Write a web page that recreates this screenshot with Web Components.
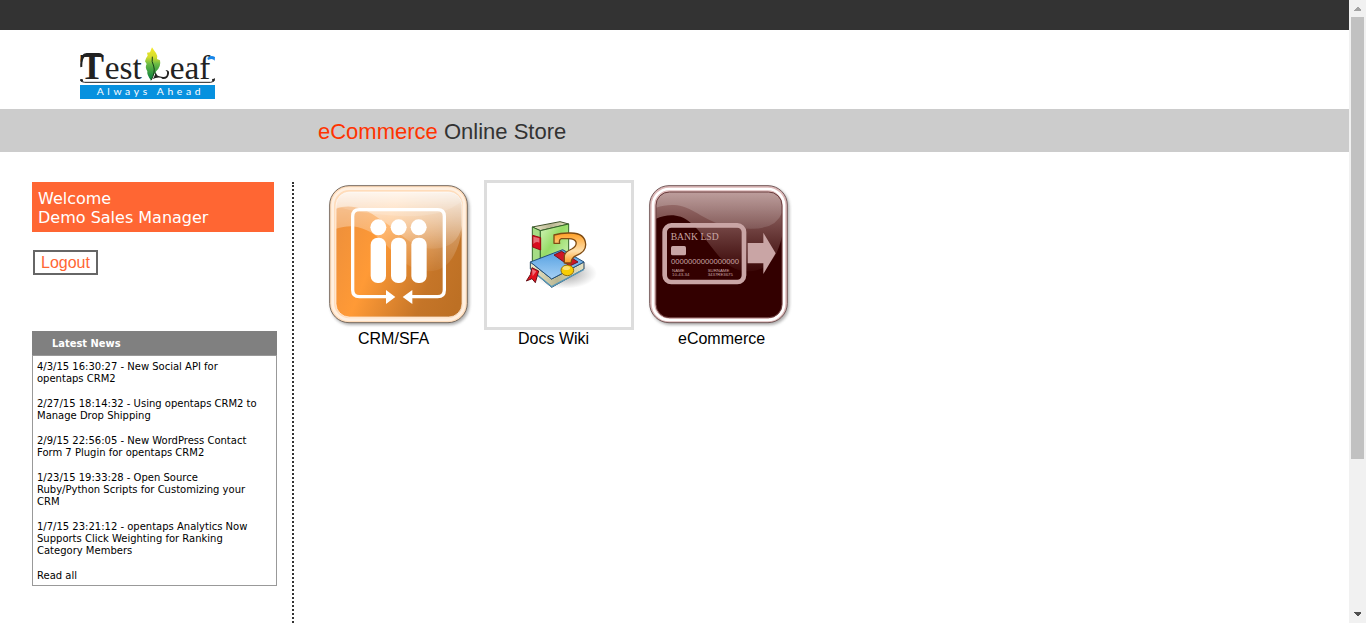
<!DOCTYPE html>
<html lang="en">
<head>
<meta charset="utf-8">
<title>eCommerce Online Store</title>
<style>
  body { margin: 0; background: #fff; color: #000; font-family: "Liberation Sans", Arial, sans-serif; }
</style>
</head>
<body>
<app-shell>
  <site-header></site-header>
  <title-bar><span slot="accent">eCommerce</span> Online Store</title-bar>
  <page-body>
    <welcome-box slot="side">Demo Sales Manager</welcome-box>
    <logout-form slot="side"></logout-form>
    <news-panel slot="side" heading="Latest News">
      <news-item>4/3/15 16:30:27 - New Social API for opentaps CRM2</news-item>
      <news-item>2/27/15 18:14:32 - Using opentaps CRM2 to Manage Drop Shipping</news-item>
      <news-item>2/9/15 22:56:05 - New WordPress Contact Form 7 Plugin for opentaps CRM2</news-item>
      <news-item>1/23/15 19:33:28 - Open Source <br>Ruby/Python Scripts for Customizing your <br>CRM</news-item>
      <news-item>1/7/15 23:21:12 - opentaps Analytics Now Supports Click Weighting for Ranking Category Members</news-item>
      <news-item>Read all</news-item>
    </news-panel>
    <app-tile><crm-icon slot="icon"></crm-icon>CRM/SFA</app-tile>
    <app-tile><wiki-icon slot="icon"></wiki-icon>Docs Wiki</app-tile>
    <app-tile><store-icon slot="icon"></store-icon>eCommerce</app-tile>
  </page-body>
  <scroll-track slot="scroll"></scroll-track>
</app-shell>

<script>
const define = (name, html) => {
  const template = document.createElement('template');
  template.innerHTML = html;
  customElements.define(name, class extends HTMLElement {
    constructor() {
      super();
      this.attachShadow({ mode: 'open' }).append(template.content.cloneNode(true));
    }
    connectedCallback() {
      const heading = this.shadowRoot.querySelector('[data-heading]');
      if (heading) heading.textContent = this.getAttribute('heading');
    }
  });
};

define('app-shell', `
<style>
  :host { display: flex; height: 100vh; overflow: hidden; }
  main { flex: 1; min-width: 0; display: flex; flex-direction: column; overflow: hidden; }
</style>
<main><slot></slot></main><slot name="scroll"></slot>`);

define('site-header', `
<style>
  :host { display: block; flex: none; border-top: 30px solid #333; padding: 16px 80px 10px; }
  a { display: block; width: 135px; }
  svg { display: block; width: 135px; height: 53px; }
</style>
<a href="#" aria-label="TestLeaf home">
<svg viewBox="30 18 405 159">
  <defs><linearGradient id="leaf" x1="0" y1="0" x2="0" y2="1"><stop offset="0" stop-color="#f6e926"/><stop offset=".3" stop-color="#d3dc2c"/><stop offset=".5" stop-color="#6cbb45"/><stop offset="1" stop-color="#007a3d"/></linearGradient></defs>
  <g font-family="Liberation Serif, serif" fill="#222">
    <text x="30" y="117" font-size="108" font-weight="bold">T</text>
    <text x="104" y="117" font-size="100">est</text>
    <text x="299" y="117" font-size="100">eaf</text>
  </g>
  <path d="M31 82Q28 40 50 39H84Q99 38 100 50H44Q36 58 37 80Z" fill="#222"/>
  <path d="M256 86Q258 108 246 118Q268 108 278 117Q294 118 297 101Q299 90 286 90Q295 95 289 108Q283 114 268 109Q257 108 256 86Z" fill="#222"/>
  <path d="M246 22Q252 32 258 39Q264 48 261 57L270 61Q274 80 259 93Q249 106 243 121Q230 105 232 94Q224 82 230 72L225 64Q228 52 233 47L231 38L240 37Z" fill="url(#leaf)"/>
  <path d="M247 50Q244 66 251 78Q257 97 243 121" fill="none" stroke="#173f17" stroke-width="3"/>
  <path d="M412 54Q422 44 435 51L434 62Q428 53 414 60Z" fill="#1685e8"/>
  <path d="M31 118Q33 127 44 127H422Q434 127 434 115" fill="none" stroke="#222" stroke-width="3"/>
  <circle cx="35" cy="121" r="4" fill="#222"/><circle cx="430" cy="120" r="4" fill="#222"/>
  <rect x="30" y="135" width="405" height="42" fill="#0791df"/>
  <text x="80" y="164" font-family="Lato, sans-serif" font-size="31" letter-spacing="11" fill="#fff">Always Ahead</text>
</svg></a>`);

define('title-bar', `
<style>
  :host { display: block; flex: none; background: #ccc; padding: 10px 20px 7px 318px; }
  h1 { margin: 0; font-size: 22px; line-height: 26px; font-weight: normal; color: #333; }
  slot[name=accent] { color: #ff3300; }
</style>
<h1><slot name="accent"></slot><slot></slot></h1>`);

define('page-body', `
<style>
  :host { display: flex; flex: 1; padding: 28px 0 0 32px; min-height: 0; }
  aside { width: 245px; margin-top: 2px; padding-right: 15px; flex: none; border-right: 2px dotted #333; }
  section { display: flex; flex-wrap: wrap; align-content: flex-start; gap: 10px; padding-left: 30px; }
</style>
<aside><slot name="side"></slot></aside><section><slot></slot></section>`);

define('welcome-box', `
<style>
  :host { display: block; margin-right: 3px; padding: 7px 6px 5px; background: #ff6633; color: #fff; font: 16px/19px "DejaVu Sans", Verdana, sans-serif; }
</style>
Welcome<br><slot></slot>`);

define('logout-form', `
<style>
  :host { display: block; padding: 18px 0 56px 1px; }
  button { display: block; height: 25px; padding: 0 6px; border: 2px solid #666; background: #fff; color: #ff6633; font: 16px/21px "Liberation Sans", Arial, sans-serif; }
</style>
<button type="button">Logout</button>`);

define('news-panel', `
<style>
  :host { display: block; font-family: "DejaVu Sans", Verdana, sans-serif; }
  h2 { margin: 0; padding: 6px 20px 4px; background: #808080; color: #fff; font: bold 11px/14px "DejaVu Sans Condensed", Tahoma, "DejaVu Sans", sans-serif; }
  div { border: 1px solid #999; padding: 5px 16px 3px 4px; display: flex; flex-direction: column; gap: 13px; }
</style>
<h2 data-heading></h2><div><slot></slot></div>`);

define('news-item', `
<style>
  :host { display: block; font-size: 10px; line-height: 12px; }
  a { color: #000; text-decoration: none; }
</style>
<a href="#"><slot></slot></a>`);

define('app-tile', `
<style>
  :host { display: block; width: 150px; }
  a { display: block; color: #000; text-decoration: none; font-size: 16px; line-height: 18px; }
  span { display: block; padding-left: 34px; }
</style>
<a href="#"><slot name="icon"></slot><span><slot></slot></span></a>`);

const iconStyle = `<style>:host { display: block; } svg { display: block; width: 150px; height: 150px; }</style>`;

define('crm-icon', iconStyle + `
<svg viewBox="12 12 450 450" aria-hidden="true">
  <defs>
    <linearGradient id="b" x1="0" y1=".4" x2="1" y2=".8"><stop offset="0" stop-color="#f0913a"/><stop offset=".3" stop-color="#ff9a36"/><stop offset=".75" stop-color="#c57528"/><stop offset="1" stop-color="#bd7024"/></linearGradient>
    <linearGradient id="g" x1="0" y1="0" x2="0" y2="1"><stop offset="0" stop-color="#fff" stop-opacity=".8"/><stop offset=".3" stop-color="#fff" stop-opacity=".5"/><stop offset="1" stop-color="#fff" stop-opacity=".08"/></linearGradient>
    <linearGradient id="w" x1="0" y1="0" x2="0" y2="1"><stop offset="0" stop-color="#fff" stop-opacity=".5"/><stop offset="1" stop-color="#fff" stop-opacity=".05"/></linearGradient>
    <clipPath id="c"><rect x="48" y="48" width="378" height="375" rx="40"/></clipPath>
    <filter id="s"><feGaussianBlur stdDeviation="4"/></filter>
  </defs>
  <rect x="32" y="33" width="416" height="414" rx="60" fill="#777" opacity=".6" filter="url(#s)"/>
  <rect x="29" y="29" width="413" height="411" rx="58" fill="#ffdcba" stroke="#786b60" stroke-width="3"/>
  <rect x="38" y="38" width="395" height="393" rx="50" fill="none" stroke="#fff0e1" stroke-width="8"/>
  <g clip-path="url(#c)">
    <rect x="48" y="48" width="378" height="375" fill="url(#b)"/>
    <path d="M48 48H426V160Q406 286 325 286C240 286 205 190 140 163C104 145 78 150 48 158Z" fill="url(#w)"/>
    <path d="M48 48H426V150Q412 217 340 218C270 218 240 165 180 130C130 92 86 84 48 98Z" fill="url(#g)"/>
    <path d="M48 48H426V74Q375 122 250 121Q115 114 48 91Z" fill="#fff" opacity=".15"/>
  </g>
  <rect x="48" y="48" width="378" height="375" rx="40" fill="none" stroke="#fff" stroke-opacity=".6" stroke-width="3"/>
  <g fill="#fff"><circle cx="175" cy="154" r="24"/><circle cx="236" cy="154" r="24"/><circle cx="296" cy="154" r="24"/>
  <rect x="152" y="185" width="46" height="136" rx="21"/><rect x="213" y="185" width="46" height="136" rx="21"/><rect x="274" y="185" width="46" height="136" rx="21"/>
  <path d="M198 342L226 363L198 384ZM277 342L248 363L277 384Z"/></g>
  <path d="M200 362H118Q98 362 98 342V121Q98 101 118 101H353Q373 101 373 121V342Q373 362 353 362H272" fill="none" stroke="#fff" stroke-width="10"/>
</svg>`);

define('store-icon', iconStyle + `
<svg viewBox="12 12 450 450" aria-hidden="true">
  <defs>
    <linearGradient id="w" x1="0" y1="0" x2="0" y2="1"><stop offset="0" stop-color="#fff" stop-opacity=".25"/><stop offset="1" stop-color="#fff" stop-opacity=".12"/></linearGradient>
    <linearGradient id="g" x1="0" y1="0" x2="0" y2="1"><stop offset="0" stop-color="#d9b4b1" stop-opacity=".7"/><stop offset="1" stop-color="#c09793" stop-opacity=".05"/></linearGradient>
    <clipPath id="c"><rect x="48" y="48" width="378" height="377" rx="40"/></clipPath>
    <filter id="s"><feGaussianBlur stdDeviation="4"/></filter>
  </defs>
  <rect x="32" y="33" width="416" height="414" rx="60" fill="#777" opacity=".6" filter="url(#s)"/>
  <rect x="29" y="29" width="413" height="411" rx="58" fill="#ddb9b9" stroke="#745959" stroke-width="3"/>
  <rect x="39" y="39" width="393" height="393" rx="49" fill="none" stroke="#fff" stroke-width="8"/>
  <g clip-path="url(#c)">
    <rect x="48" y="48" width="378" height="377" fill="#330000"/>
    <path d="M48 48H426V180Q404 286 325 286C240 286 214 192 150 139C117 111 80 115 48 128Z" fill="url(#g)"/>
    <path d="M48 48H426V110Q407 160 330 158C250 158 210 134 165 108C120 82 86 84 48 95Z" fill="url(#w)"/>
  </g>
  <rect x="48" y="48" width="378" height="377" rx="40" fill="none" stroke="#6b3e3e" stroke-width="3"/>
  <rect x="74" y="148" width="238" height="170" rx="20" fill="none" stroke="#c9a5a5" stroke-width="14"/>
  <rect x="93" y="210" width="45" height="28" rx="5" fill="#c9a5a5"/>
  <path d="M323 201H370V170L407 232L370 294V262H323Z" fill="#c9a5a5"/>
  <g fill="#c9a5a5" font-family="Liberation Sans, sans-serif">
    <text x="92" y="193" font-family="Liberation Serif, serif" font-size="29">BANK LSD</text>
    <text x="93" y="265" font-size="23">0000000000000000</text>
    <g font-size="13"><text x="96" y="287">NAME</text><text x="96" y="301">10-43-34</text><text x="203" y="287">SURNAME</text><text x="203" y="301">3437RE3675</text></g>
  </g>
</svg>`);

define('wiki-icon', `<style>:host { display: block; box-sizing: border-box; border: 3px solid #ddd; } svg { display: block; width: 144px; height: 144px; }</style>
<svg viewBox="21 21 432 432" aria-hidden="true">
  <defs>
    <linearGradient id="gr" x1="0" y1="0" x2="1" y2="1"><stop offset="0" stop-color="#d5f4bd"/><stop offset=".45" stop-color="#96dc66"/><stop offset="1" stop-color="#d6f5bd"/></linearGradient>
    <linearGradient id="bl" x1="0" y1="0" x2="0" y2="1"><stop offset="0" stop-color="#4f9de0"/><stop offset="1" stop-color="#a5d0f5"/></linearGradient>
    <linearGradient id="or" x1="0" y1="0" x2="0" y2="1"><stop offset="0" stop-color="#ff9e24"/><stop offset=".6" stop-color="#ffe0ac"/><stop offset="1" stop-color="#ff9e24"/></linearGradient>
    <linearGradient id="pg" x1="0" y1="0" x2="1" y2="0"><stop offset="0" stop-color="#eeeacb"/><stop offset=".5" stop-color="#b9b692"/><stop offset="1" stop-color="#e6e2c2"/></linearGradient>
    <radialGradient id="sh"><stop offset="0" stop-color="#555" stop-opacity=".55"/><stop offset="1" stop-color="#555" stop-opacity="0"/></radialGradient>
  </defs>
  <ellipse cx="255" cy="292" rx="96" ry="46" fill="url(#sh)"/>
  <g stroke-linejoin="round" stroke-width="3">
    <path d="M157 153L240 137L266 144L181 164Z" fill="url(#pg)" stroke="#41522c"/>
    <path d="M157 153L181 164V267L157 255Z" fill="#a5dd85" stroke="#34662a"/>
    <path d="M181 164L266 144V245L181 267Z" fill="url(#gr)" stroke="#34662a"/>
    <path d="M158 178L182 185V222L158 213Z" fill="#d80d1d" stroke="#970c13"/>
    <path d="M160 182L178 187V200Q168 195 160 204Z" fill="#fff" opacity=".4" stroke="none"/>
    <path d="M151 258L215 309L312 258V279L215 334L151 279Z" fill="url(#pg)" stroke="#24415c"/>
    <path d="M151 258L248 221L312 258L215 309Z" fill="url(#bl)" stroke="#24517a"/>
    <path d="M151 279L215 332L312 280" fill="none" stroke="#5796b5" stroke-width="4"/>
    <path d="M222 237L245 226L294 258L269 270Z" fill="#ce1626" stroke="#741522"/>
    <path d="M156 275L176 285L166 320L156 308L139 315L151 296Z" fill="#e3101c" stroke="#681219"/>
    <path d="M156 279L169 286L158 301Z" fill="#fff" opacity=".4" stroke="none"/>
  </g>
  <path d="M222 202V177Q246 170 270 171Q315 170 317 205Q318 228 290 238Q274 244 273 261H253V240Q254 228 275 219Q291 211 288 198Q284 188 266 188H244Q236 190 239 202Z" fill="url(#or)" stroke="#7f4b13" stroke-width="4" stroke-linejoin="round"/>
  <ellipse cx="262" cy="283" rx="19" ry="16" fill="#f8cd05" stroke="#92700d" stroke-width="3"/>
  <ellipse cx="259" cy="276" rx="11" ry="6" fill="#fff" opacity=".45"/>
</svg>`);

define('scroll-track', `
<style>
  :host { flex: none; box-sizing: border-box; width: 17px; display: flex; flex-direction: column; align-items: center; background: #f1f1f1; }
  svg { display: block; width: 17px; height: 17px; flex: none; }
  div { flex: 1; width: 13px; }
  i { display: block; height: 75%; background: #c1c1c1; }
</style>
<svg viewBox="0 0 17 17" shape-rendering="crispEdges" aria-hidden="true"><path d="M5 11V10L8 7H9L12 10V11Z" fill="#a3a3a3"/></svg>
<div><i></i></div>
<svg viewBox="0 0 17 17" shape-rendering="crispEdges" aria-hidden="true"><path d="M5 6V7L8 10H9L12 7V6Z" fill="#505050"/></svg>`);
</script>
</body>
</html>
